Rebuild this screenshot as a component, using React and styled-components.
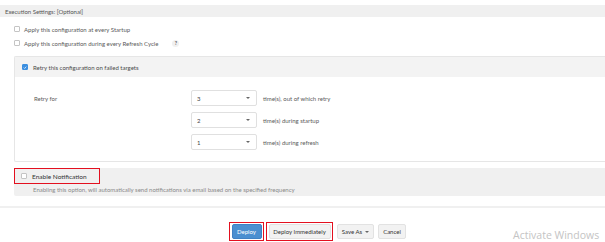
import React from "react";
import styled, { createGlobalStyle } from "styled-components";

const Global = createGlobalStyle`
  html, body { margin: 0; padding: 0; background: #fff; }
  body { width: 605px; height: 242px; overflow: hidden; font-family: Lato, "Open Sans", sans-serif; color: #555; }
  * { box-sizing: border-box; }
`;

const Page = styled.div`
  position: relative;
  width: 605px;
  height: 242px;
  padding-top: 5px;
  font-size: 6px;
`;

const SectionHeader = styled.div`
  height: 12px;
  background: #f0f0f0;
  padding-left: 5px;
  display: flex;
  align-items: center;
  color: #555;
`;

const Options = styled.div`
  padding: 9px 0 0 14px;
  display: flex;
  flex-direction: column;
  gap: 8px;
`;

const OptionRow = styled.label`
  display: flex;
  align-items: center;
  gap: 4px;
  height: 6px;
  color: #5a5a5a;
`;

const Box = styled.span`
  width: 6px;
  height: 6px;
  flex: none;
  border-radius: 1px;
  border: 1px solid ${p => (p.$checked ? "#3b8fe0" : "#c4c4c4")};
  background: ${p => (p.$checked ? "#3b8fe0" : "#fff")};
  display: inline-flex;
  align-items: center;
  justify-content: center;
`;

const Help = styled.span`
  margin-left: 10px;
  width: 7px;
  height: 7px;
  border-radius: 50%;
  background: #f0f0f0;
  color: #555;
  font-size: 5px;
  font-weight: 700;
  display: inline-flex;
  align-items: center;
  justify-content: center;
`;

const Panel = styled.div`
  margin: 10px 0 0 14px;
  border: 1px solid #e6e6e6;
  border-right: none;
  border-radius: 2px 0 0 2px;
  height: 106px;
`;

const PanelHeader = styled.div`
  height: 20px;
  background: #f3f3f3;
  display: flex;
  align-items: center;
  gap: 5px;
  padding-left: 7px;
  color: #4a4a4a;
`;

const Grid = styled.div`
  display: grid;
  grid-template-columns: 151px 66px auto;
  column-gap: 6px;
  row-gap: 6px;
  padding: 13px 0 0 19px;
  align-items: center;
`;

const RetryLabel = styled.div`
  grid-row: 1;
  grid-column: 1;
  color: #5a5a5a;
  align-self: start;
  padding-top: 5px;
`;

const Select = styled.div`
  grid-column: 2;
  height: 16px;
  border: 1px solid #e0e0e0;
  border-radius: 2px;
  display: flex;
  align-items: center;
  justify-content: space-between;
  padding: 0 6px 0 5px;
  color: #444;
  background: #fff;
`;

const Caret = styled.span`
  width: 0;
  height: 0;
  border-left: 2px solid transparent;
  border-right: 2px solid transparent;
  border-top: 2.5px solid #666;
`;

const Unit = styled.div`
  grid-column: 3;
  color: #5a5a5a;
`;

const NotifyPanel = styled.div`
  margin: 6px 0 0 14px;
  height: 28px;
  background: #f0f0f0;
  border-radius: 2px 0 0 2px;
`;

const Highlight = styled.div`
  display: inline-flex;
  align-items: center;
  gap: 5px;
  border: 1.5px solid #e3101f;
  width: 86px;
  height: 16px;
  padding-left: 6px;
  color: #333;
  font-size: 6.5px;
`;

const Desc = styled.div`
  padding-left: 19px;
  color: #8a8a8a;
  margin-top: 2px;
`;

const Divider = styled.div`
  margin-top: 10px;
  height: 2px;
  background: #f0f0f0;
`;

const Actions = styled.div`
  display: flex;
  align-items: center;
  padding: 14px 0 0 229px;
`;

const Mark = styled.div`
  border: 1.5px solid #e3101f;
  padding: 1px 1.5px;
  display: flex;
  margin-right: ${p => p.$mr || 0}px;
`;

const Button = styled.div`
  height: 15px;
  width: ${p => p.$w}px;
  display: flex;
  align-items: center;
  justify-content: center;
  gap: 3px;
  border-radius: 2px;
  font-size: 6px;
  background: ${p => (p.$primary ? "#4a8fd0" : "#f2f2f2")};
  color: ${p => (p.$primary ? "#fff" : "#333")};
  border: 1px solid ${p => (p.$primary ? "#3f82c4" : "#e2e2e2")};
  margin-right: ${p => p.$mr || 0}px;
`;

const Watermark = styled.div`
  position: absolute;
  left: 513px;
  top: 229px;
  font-family: "Open Sans", "Noto Sans", sans-serif;
  font-size: 10.5px;
  line-height: 12px;
  color: #c4c4c4;
  white-space: nowrap;
`;

const Check = () => (
  <svg width="5" height="5" viewBox="0 0 10 10">
    <path d="M2 5.2 L4.2 7.4 L8.2 2.8" fill="none" stroke="#fff" strokeWidth="1.8" />
  </svg>
);

export default function App() {
  const rows = [
    ["3", "time(s), out of which retry"],
    ["2", "time(s) during startup"],
    ["1", "time(s) during refresh"],
  ];
  return (
    <Page>
      <Global />
      <SectionHeader>Execution Settings: [Optional]</SectionHeader>
      <Options>
        <OptionRow>
          <Box />
          Apply this configuration at every Startup
        </OptionRow>
        <OptionRow>
          <Box />
          Apply this configuration during every Refresh Cycle
          <Help>?</Help>
        </OptionRow>
      </Options>
      <Panel>
        <PanelHeader>
          <Box $checked>
            <Check />
          </Box>
          Retry this configuration on failed targets
        </PanelHeader>
        <Grid>
          <RetryLabel>Retry for</RetryLabel>
          {rows.map(([v, t]) => (
            <React.Fragment key={v}>
              <Select>
                {v}
                <Caret />
              </Select>
              <Unit>{t}</Unit>
            </React.Fragment>
          ))}
        </Grid>
      </Panel>
      <NotifyPanel>
        <Highlight>
          <Box />
          Enable Notification
        </Highlight>
        <Desc>
          Enabling this option, will automatically send notifications via email based on the specified frequency
        </Desc>
      </NotifyPanel>
      <Divider />
      <Actions>
        <Mark $mr={2}>
          <Button $primary $w={30}>Deploy</Button>
        </Mark>
        <Mark $mr={4}>
          <Button $w={62}>Deploy Immediately</Button>
        </Mark>
        <Button $w={37} $mr={4}>
          Save As <Caret />
        </Button>
        <Button $w={28}>Cancel</Button>
      </Actions>
      <Watermark>Activate Windows</Watermark>
    </Page>
  );
}
